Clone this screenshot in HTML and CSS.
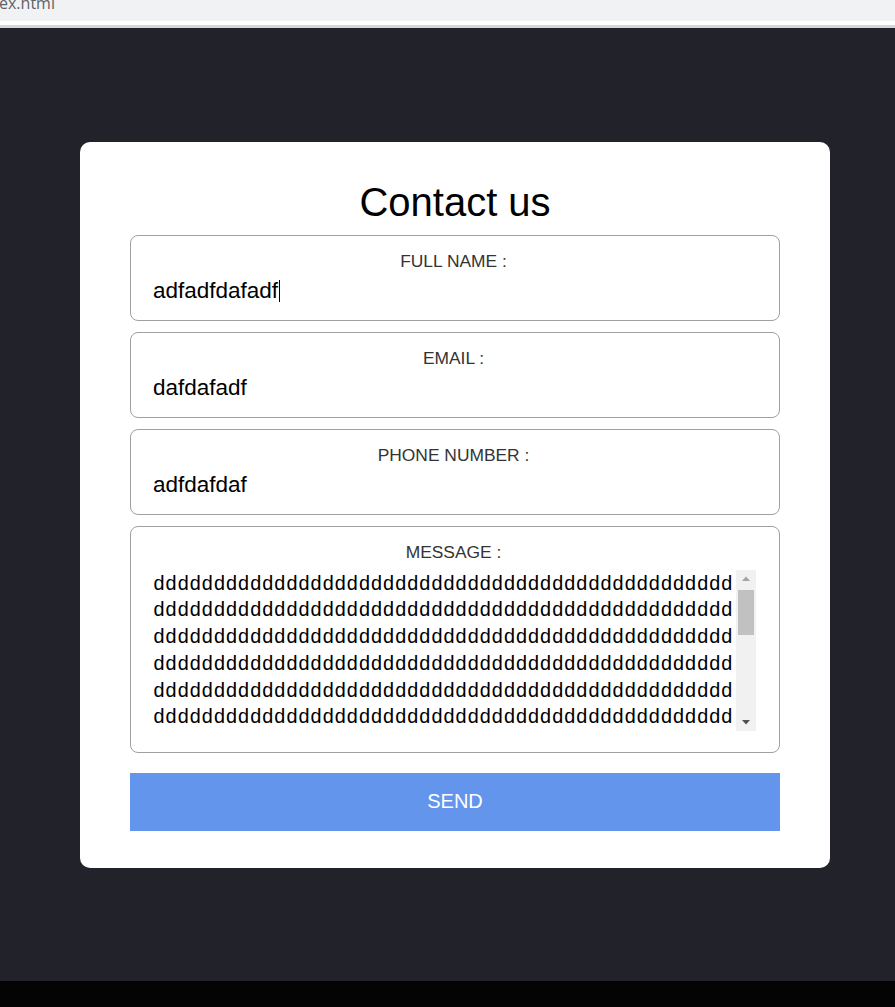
FILE: index.html
```html
<!DOCTYPE html>
<html lang="en">
<head>
<meta charset="utf-8">
<title>Contact us</title>
<link rel="stylesheet" href="styles.css">
</head>
<body>
<div class="browser-bar"><div class="url">ex.html</div></div>
<div class="tab-gap"></div>
<main class="stage">
  <form class="card">
    <h1 class="title">Contact us</h1>
    <div class="fields">
      <label class="field">
        <span class="field-label">FULL NAME :</span>
        <input class="field-input" type="text" value="adfadfdafadf">
        <span class="caret"></span>
      </label>
      <label class="field">
        <span class="field-label">EMAIL :</span>
        <input class="field-input" type="text" value="dafdafadf">
      </label>
      <label class="field">
        <span class="field-label">PHONE NUMBER :</span>
        <input class="field-input" type="text" value="adfdafdaf">
      </label>
      <label class="field field-message">
        <span class="field-label">MESSAGE :</span>
        <span class="message-box">
          <textarea class="message">dddddddddddddddddddddddddddddddddddddddddddddddddddddddddddddddddddddddddddddddddddddddddddddddddddddddddddddddddddddddddddddddddddddddddddddddddddddddddddddddddddddddddddddddddddddddddddddddddddddddddddddddddddddddddddddddddddddddddddddddddddddddddddddddddddddddddddddddddddddddddddddddddddddddddddddddddddddddddddddddddddddddddddddddddddddddddddddddddddddddddddddddddddddddddddddddddddddddddddddddddddddddddddddddddddddddddddddddddddddddddddddddddddddddddddddddddddddddddddddddddddddddddddddddddddddddddddddddddddddddddddddddddddddddddddddddddddddddddddddddddddddddddddddddddddddddddddddddddddddddddddddddddddddddddddddddddddddddddddddddddddddddddddddddddddddddddddddddddddddddddddddddddddddddddddddddddddddddddddddddddddddddddddddddddddddddddddddddddddddddddddddddddddddddddddddddddddddddddddddddddddddddddddddddddddddddddddddddddddddddddddddddddddddddddddddddddddddddddddddddddddddddddddddddd</textarea>
          <span class="scrollbar" aria-hidden="true">
            <span class="sb-button">
              <svg width="8" height="5" viewBox="0 0 8 5"><path d="M0 5 L4 0.5 L8 5 Z" fill="#a3a3a3"/></svg>
            </span>
            <span class="sb-track"><span class="sb-thumb"></span></span>
            <span class="sb-button">
              <svg width="8" height="5" viewBox="0 0 8 5"><path d="M0 0 L8 0 L4 4.5 Z" fill="#505050"/></svg>
            </span>
          </span>
        </span>
      </label>
    </div>
    <button class="send" type="button">SEND</button>
  </form>
</main>
<div class="taskbar"></div>
</body>
</html>
```

FILE: styles.css
```css
html, body {
  margin: 0;
  height: 100%;
}

body {
  display: flex;
  flex-direction: column;
  background: #22222a;
  font-family: "Liberation Sans", Arial, sans-serif;
  overflow: hidden;
}

.browser-bar {
  flex: none;
  height: 21px;
  background: #f1f2f4;
  overflow: hidden;
}

.url {
  margin: -8px 0 0 -1px;
  font: 16px/22px "Open Sans", sans-serif;
  color: #5f6368;
}

.tab-gap {
  flex: none;
  height: 4px;
  background: #ffffff;
  border-bottom: 3px solid #d6d6d6;
}

.stage {
  flex: 1;
  display: flex;
  align-items: center;
  padding-left: 80px;
}

.card {
  width: 750px;
  box-sizing: border-box;
  padding: 37px 50px;
  background: #ffffff;
  border-radius: 10px;
}

.title {
  margin: 0 0 10px;
  font-size: 40px;
  line-height: 46px;
  font-weight: normal;
  text-align: center;
  color: #000000;
}

.fields {
  display: flex;
  flex-direction: column;
  gap: 11px;
}

.field {
  position: relative;
  display: flex;
  flex-direction: column;
  border: 1px solid #a0a0a0;
  border-radius: 8px;
  padding: 15px 23px 16px 20px;
}

.field-label {
  font-size: 17.4px;
  line-height: 20px;
  color: #333333;
  text-align: center;
  margin-bottom: 7px;
}

.field-input {
  width: 100%;
  box-sizing: border-box;
  height: 26px;
  margin: 0;
  padding: 0 2px;
  border: none;
  outline: none;
  background: transparent;
  color: #000000;
  font: 22.5px/26px "Liberation Sans", Arial, sans-serif;
}

.caret {
  position: absolute;
  left: 148px;
  top: 44px;
  width: 1px;
  height: 22px;
  background: #000000;
}

.field-message .field-label {
  margin-bottom: 8px;
}

.message-box {
  display: flex;
  height: 161px;
  margin-bottom: 5px;
}

.message {
  flex: none;
  width: 585px;
  height: 100%;
  box-sizing: border-box;
  margin: 0;
  padding: 2px 0 2px 2px;
  border: none;
  outline: none;
  resize: none;
  overflow: hidden;
  word-break: break-all;
  background: #ffffff;
  color: #000000;
  font-family: "Liberation Mono", monospace;
  font-size: 20px;
  letter-spacing: 0.08px;
  line-height: 26.8px;
}

.scrollbar {
  flex: none;
  width: 20px;
  display: flex;
  flex-direction: column;
  background: #f1f1f1;
}

.sb-button {
  flex: none;
  height: 17px;
  display: flex;
  align-items: center;
  justify-content: center;
}

.sb-track {
  flex: 1;
  display: flex;
  flex-direction: column;
  padding: 3px 2px 0;
}

.sb-thumb {
  height: 45px;
  background: #c1c1c1;
}

.send {
  display: block;
  width: 100%;
  height: 58px;
  margin-top: 20px;
  border: none;
  background: #6495ed;
  color: #ffffff;
  font: 20px "Liberation Sans", Arial, sans-serif;
  cursor: pointer;
}

.taskbar {
  flex: none;
  height: 26px;
  background: #040404;
}
```
